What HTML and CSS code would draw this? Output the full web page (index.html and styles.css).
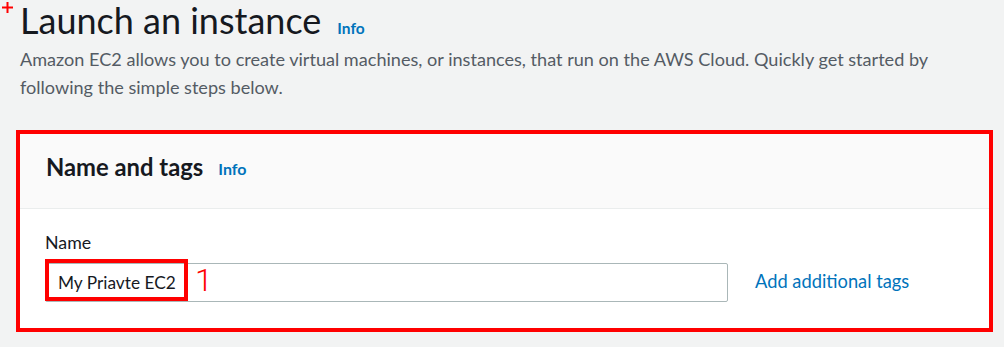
FILE: index.html
```html
<!DOCTYPE html>
<html lang="en">
<head>
<meta charset="utf-8">
<title>Launch an instance</title>
<link rel="stylesheet" href="styles.css">
</head>
<body>
<svg class="mark-plus" width="11" height="11" viewBox="0 0 11 11" aria-hidden="true"><path d="M0 4.5h11v2H0zM4.5 0h2v11h-2z" fill="#ff0000"/></svg>
<main class="page">
  <header class="page-head">
    <div class="title-row">
      <h1 class="title">Launch an instance</h1>
      <a class="info">Info</a>
    </div>
    <p class="desc">Amazon EC2 allows you to create virtual machines, or instances, that run on the AWS Cloud. Quickly get started by following the simple steps below.</p>
  </header>
  <section class="card">
    <div class="card-head">
      <h2 class="card-title">Name and tags</h2>
      <a class="info info-sm">Info</a>
    </div>
    <div class="card-body">
      <label class="field-label" for="name">Name</label>
      <div class="field-row">
        <div class="input-wrap">
          <input class="input" id="name" type="text" value="My Priavte EC2">
          <span class="mark-box"></span>
          <span class="mark-num">1</span>
        </div>
        <a class="link">Add additional tags</a>
      </div>
    </div>
    <span class="mark-frame"></span>
  </section>
</main>
</body>
</html>
```
FILE: styles.css
```css
* { box-sizing: border-box; }
html, body { margin: 0; padding: 0; }
body {
  background: #f2f3f3;
  font-family: Lato, "Open Sans", sans-serif;
  color: #16191f;
  width: 1004px;
  height: 347px;
  overflow: hidden;
  position: relative;
}
.mark-plus { position: absolute; left: 2px; top: 2px; }
.page { padding: 0 15px 0 20px; }
.title-row { display: flex; align-items: baseline; gap: 16px; }
.title { margin: 0; font-size: 36px; line-height: 40px; font-weight: 400; color: #16191f; }
.info { color: #0073bb; font-weight: 700; font-size: 15.5px; text-decoration: none; }
.desc {
  margin: 5px 0 0;
  font-size: 18.1px;
  line-height: 28px;
  color: #545b64;
}
.card {
  position: relative;
  margin-top: 29px;
  background: #fff;
  box-shadow: 0 1px 1px 0 rgba(0,28,36,.3), 1px 1px 1px 0 rgba(0,28,36,.15), -1px 1px 1px 0 rgba(0,28,36,.15);
}
.card-head {
  height: 79px;
  display: flex;
  align-items: center;
  gap: 15px;
  padding: 0 26px 5px;
  background: #fafafa;
  border-bottom: 1px solid #eaeded;
  border-top: 1px solid #eaeded;
}
.card-head .info { padding-top: 3px; font-size: 16px; }
.card-title { margin: 0; font-size: 23.8px; line-height: 30px; font-weight: 700; color: #16191f; }
.card-body { padding: 22px 25px 26px; }
.field-label { display: block; font-size: 17.8px; line-height: 22px; color: #16191f; margin-bottom: 10px; }
.field-row { display: flex; align-items: center; gap: 27px; }
.input-wrap { position: relative; width: 683px; }
.input {
  display: block;
  width: 100%;
  height: 39px;
  padding: 0 12px;
  border: 1px solid #aab7b8;
  border-radius: 2px;
  background: #fff;
  font: 17.3px Lato, "Open Sans", sans-serif;
  color: #16191f;
  outline: none;
}
.link { color: #0073bb; font-size: 18.3px; text-decoration: none; padding-bottom: 4px; }
.mark-box {
  position: absolute;
  left: 0; top: -4px;
  width: 143px; height: 42px;
  border: 4px solid #ff0000;
}
.mark-num {
  position: absolute;
  left: 150px; top: 1px;
  font: 300 32px/32px Roboto, "Liberation Sans", sans-serif;
  color: #ff0000;
}
.mark-frame {
  position: absolute;
  left: -4px; right: -4px; top: 0; bottom: -4px;
  border: 4px solid #ff0000;
  pointer-events: none;
}
```
